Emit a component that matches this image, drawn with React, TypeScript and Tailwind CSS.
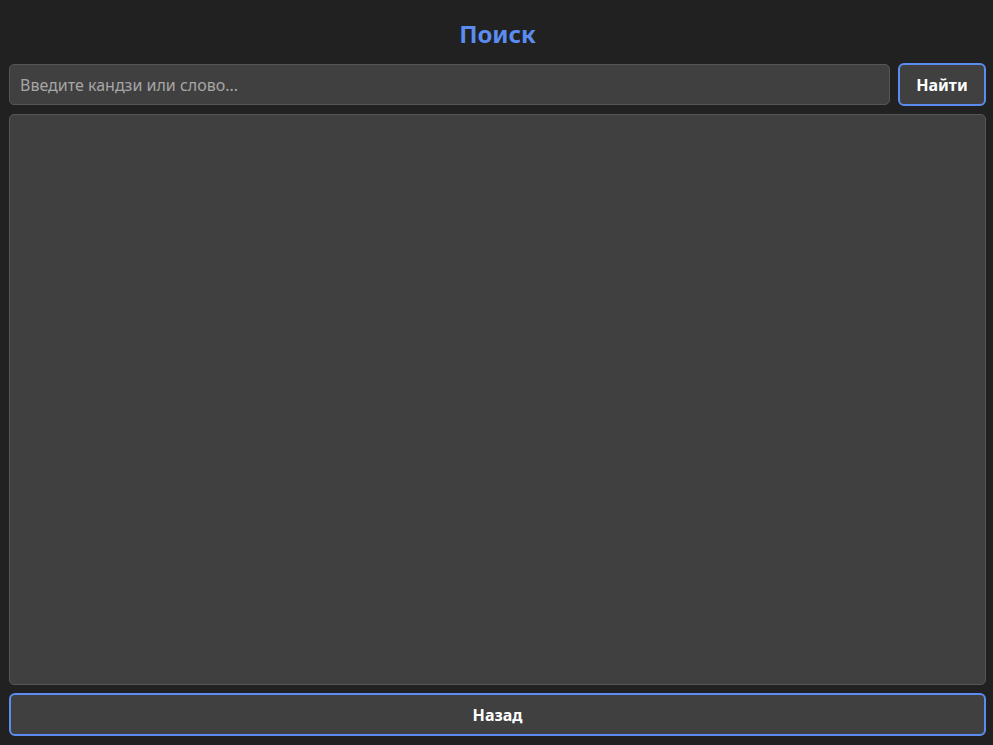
import { useState } from 'react';

export default function App() {
  const [query, setQuery] = useState('');

  return (
    <div
      className="h-screen flex flex-col bg-[#212121] pl-[9px] pr-[7px] pb-[9px] pt-[18px] overflow-hidden"
      style={{ fontFamily: '"Noto Sans", "Open Sans", sans-serif' }}
    >
      <h1 className="text-center text-[24px] leading-8 font-bold text-[#5b8cf0]">Поиск</h1>

      <div className="flex items-center gap-2 mt-[13px] h-[43px]">
        <input
          value={query}
          onChange={(e) => setQuery(e.target.value)}
          placeholder="Введите кандзи или слово..."
          className="flex-1 h-[41px] rounded-[5px] border border-[#565656] bg-[#404040] px-[10px] text-[16px] text-[#e0e0e0] placeholder:text-[#a6a6a6] outline-none"
        />
        <button className="w-[88px] h-[43px] rounded-[6px] border-2 border-[#5b8cf0] bg-[#404040] text-[16px] font-bold text-white">
          Найти
        </button>
      </div>

      <div className="flex-1 mt-2 rounded-[5px] border border-[#565656] bg-[#404040]" />

      <button className="mt-2 h-[43px] w-full rounded-[6px] border-2 border-[#5b8cf0] bg-[#404040] text-[16px] font-bold text-white">
        Назад
      </button>
    </div>
  );
}
